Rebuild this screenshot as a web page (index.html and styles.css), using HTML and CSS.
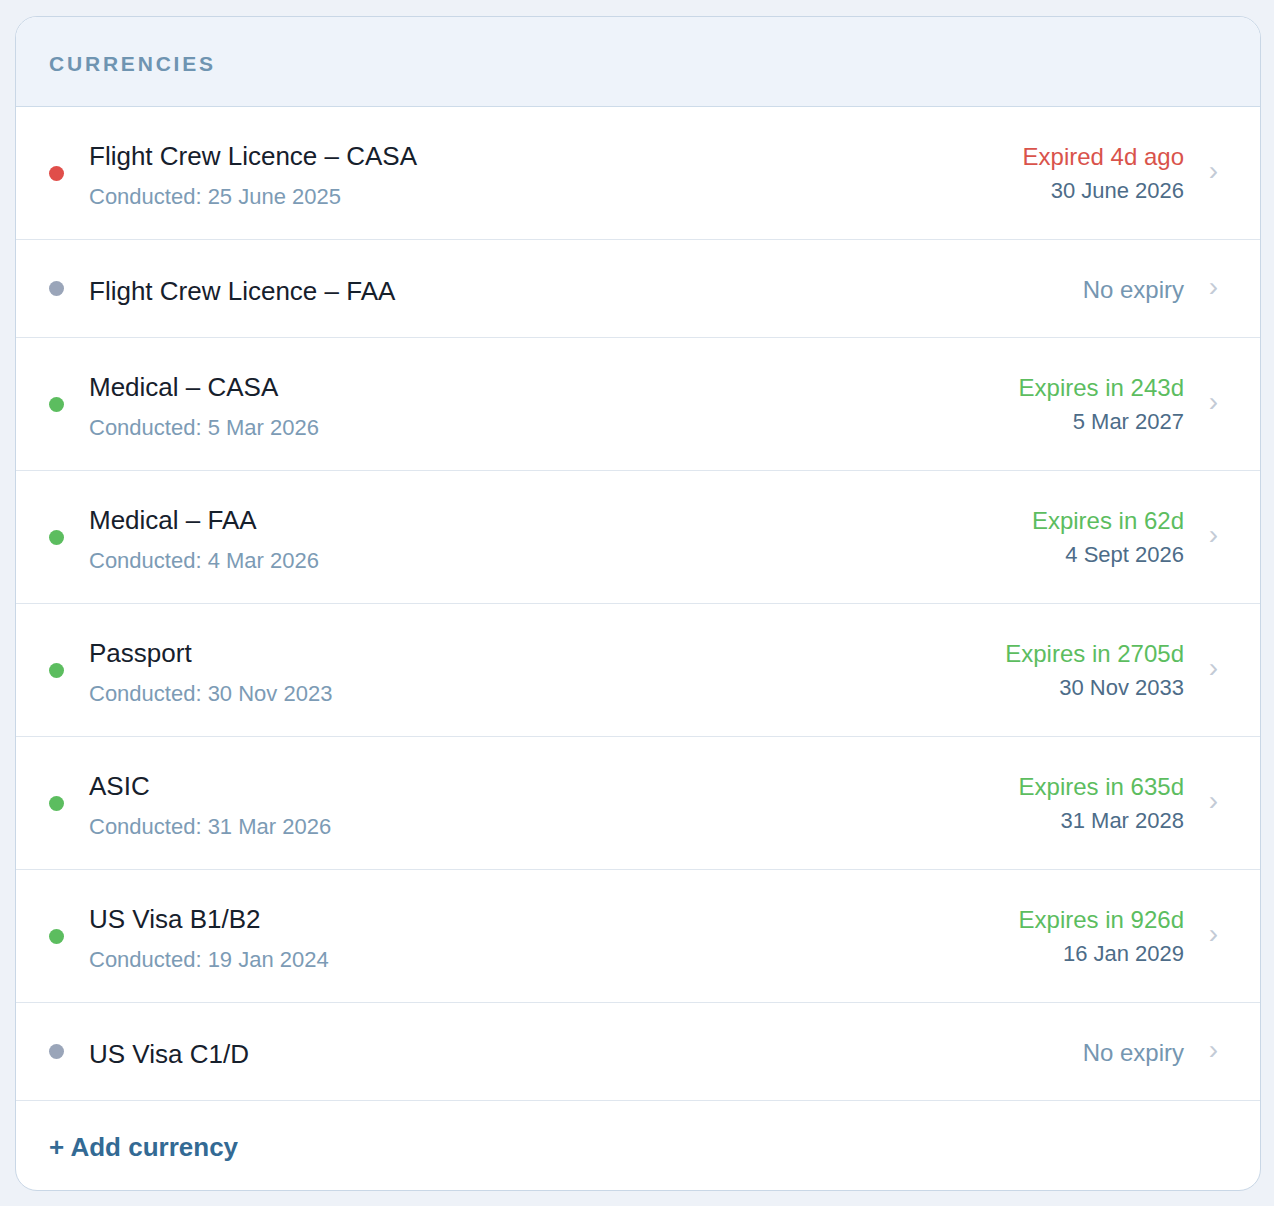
FILE: index.html
```html
<!DOCTYPE html>
<html lang="en">
<head>
    <meta charset="UTF-8">
    <title>Currencies</title>
    <link rel="stylesheet" href="styles.css">
</head>
<body>
<div class="card">
    <div class="card-head">CURRENCIES</div>

    <div class="row">
        <span class="dot red"></span>
        <div class="info">
            <div class="name">Flight Crew Licence – CASA</div>
            <div class="sub">Conducted: 25 June 2025</div>
        </div>
        <div class="status">
            <div class="state expired">Expired 4d ago</div>
            <div class="date">30 June 2026</div>
        </div>
        <span class="chev">›</span>
    </div>

    <div class="row single">
        <span class="dot grey"></span>
        <div class="info">
            <div class="name">Flight Crew Licence – FAA</div>
        </div>
        <div class="status">
            <div class="state none">No expiry</div>
        </div>
        <span class="chev">›</span>
    </div>

    <div class="row">
        <span class="dot green"></span>
        <div class="info">
            <div class="name">Medical – CASA</div>
            <div class="sub">Conducted: 5 Mar 2026</div>
        </div>
        <div class="status">
            <div class="state ok">Expires in 243d</div>
            <div class="date">5 Mar 2027</div>
        </div>
        <span class="chev">›</span>
    </div>

    <div class="row">
        <span class="dot green"></span>
        <div class="info">
            <div class="name">Medical – FAA</div>
            <div class="sub">Conducted: 4 Mar 2026</div>
        </div>
        <div class="status">
            <div class="state ok">Expires in 62d</div>
            <div class="date">4 Sept 2026</div>
        </div>
        <span class="chev">›</span>
    </div>

    <div class="row">
        <span class="dot green"></span>
        <div class="info">
            <div class="name">Passport</div>
            <div class="sub">Conducted: 30 Nov 2023</div>
        </div>
        <div class="status">
            <div class="state ok">Expires in 2705d</div>
            <div class="date">30 Nov 2033</div>
        </div>
        <span class="chev">›</span>
    </div>

    <div class="row">
        <span class="dot green"></span>
        <div class="info">
            <div class="name">ASIC</div>
            <div class="sub">Conducted: 31 Mar 2026</div>
        </div>
        <div class="status">
            <div class="state ok">Expires in 635d</div>
            <div class="date">31 Mar 2028</div>
        </div>
        <span class="chev">›</span>
    </div>

    <div class="row">
        <span class="dot green"></span>
        <div class="info">
            <div class="name">US Visa B1/B2</div>
            <div class="sub">Conducted: 19 Jan 2024</div>
        </div>
        <div class="status">
            <div class="state ok">Expires in 926d</div>
            <div class="date">16 Jan 2029</div>
        </div>
        <span class="chev">›</span>
    </div>

    <div class="row single">
        <span class="dot grey"></span>
        <div class="info">
            <div class="name">US Visa C1/D</div>
        </div>
        <div class="status">
            <div class="state none">No expiry</div>
        </div>
        <span class="chev">›</span>
    </div>

    <div class="card-foot">
        <a class="add" href="#">+ Add currency</a>
    </div>
</div>
</body>
</html>
```

FILE: styles.css
```css
body {
    margin: 0;
    padding: 16px 13px 16px 15px;
    background: #eef2f8;
    font-family: "Liberation Sans", Arial, sans-serif;
}

.card {
    background: #fff;
    border: 1.5px solid #c9d7e6;
    border-radius: 22px;
    overflow: hidden;
}

.card-head {
    background: #eef3fa;
    height: 90px;
    padding: 4px 0 0 33px;
    box-sizing: border-box;
    display: flex;
    align-items: center;
    font-size: 21px;
    font-weight: bold;
    letter-spacing: 2.8px;
    color: #6f94b1;
    border-bottom: 1.5px solid #cddbe9;
}

.row {
    display: flex;
    align-items: center;
    height: 133px;
    padding: 4px 42px 0 33px;
    border-bottom: 1.5px solid #dfe6ee;
    box-sizing: border-box;
}
.row.single {
    height: 98px;
}

.dot {
    width: 15px;
    height: 15px;
    border-radius: 50%;
    margin: 0 25px 4px 0;
    flex: none;
}
.dot.red { background: #e04e4a; }
.dot.green { background: #5cbd5f; }
.dot.grey { background: #9aa5b9; }

.info {
    flex: 1;
}
.name {
    font-size: 26px;
    color: #16202c;
    line-height: 30px;
}
.sub {
    font-size: 22px;
    color: #7c9bb5;
    margin-top: 13px;
    line-height: 26px;
}

.status {
    text-align: right;
    margin-bottom: 2px;
}
.state {
    font-size: 24px;
    line-height: 28px;
}
.state.expired { color: #d9534b; }
.state.ok { color: #5cbd5f; }
.state.none { color: #7596b1; }
.date {
    font-size: 22px;
    color: #4d6c88;
    line-height: 28px;
    margin-top: 6px;
}

.chev {
    width: 34px;
    text-align: right;
    font-size: 28px;
    color: #c3cbd6;
    margin-top: -8px;
}

.card-foot {
    height: 89px;
    padding: 4px 0 0 33px;
    box-sizing: border-box;
    display: flex;
    align-items: center;
}
.add {
    font-size: 26px;
    font-weight: bold;
    color: #336a94;
    text-decoration: none;
}
```
